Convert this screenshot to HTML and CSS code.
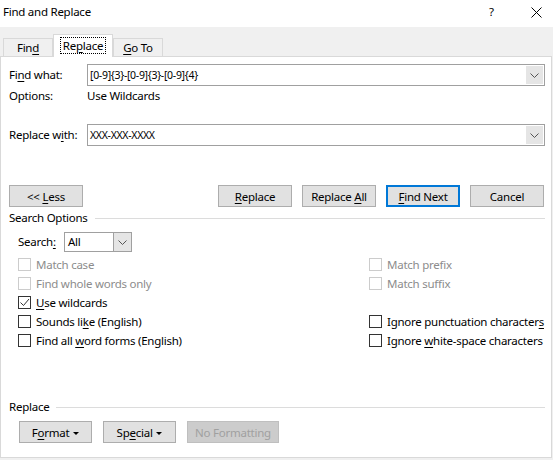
FILE: index.html
```html
<!DOCTYPE html>
<html lang="en">
<head>
    <meta charset="UTF-8">
    <title>Find and Replace</title>
    <link rel="stylesheet" href="styles.css">
</head>
<body>
    <div class="titlebar">
        <span class="title">Find and Replace</span>
        <span class="help">?</span>
        <span class="close">
            <svg width="11" height="11" viewBox="0 0 11 11"><path d="M0.5 0.5 L10.5 10.5 M10.5 0.5 L0.5 10.5" stroke="#000" stroke-width="1" fill="none"/></svg>
        </span>
    </div>

    <div class="tabs">
        <div class="tab find-tab">Fin<u>d</u></div>
        <div class="tab active"><span class="focus">Re<u>p</u>lace</span></div>
        <div class="tab goto-tab"><u>G</u>o To</div>
    </div>

    <div class="panel">
        <div class="field-row find-row">
            <label>Fi<u>n</u>d what:</label>
            <div class="combo">
                <span class="value">[0-9]{3}-[0-9]{3}-[0-9]{4}</span>
                <span class="drop"><svg width="9" height="5" viewBox="0 0 9 5"><path d="M0.5 0.5 L4.5 4.5 L8.5 0.5" stroke="#555" fill="none"/></svg></span>
            </div>
        </div>
        <div class="options-row">
            <span class="label">Options:</span>
            <span>Use Wildcards</span>
        </div>
        <div class="field-row replace-row">
            <label>Replace w<u>i</u>th:</label>
            <div class="combo">
                <span class="value">XXX-XXX-XXXX</span>
                <span class="drop"><svg width="9" height="5" viewBox="0 0 9 5"><path d="M0.5 0.5 L4.5 4.5 L8.5 0.5" stroke="#555" fill="none"/></svg></span>
            </div>
        </div>

        <div class="button-row">
            <button class="btn">&lt;&lt; <u>L</u>ess</button>
            <div class="actions">
                <button class="btn"><u>R</u>eplace</button>
                <button class="btn">Replace <u>A</u>ll</button>
                <button class="btn default"><u>F</u>ind Next</button>
                <button class="btn">Cancel</button>
            </div>
        </div>

        <div class="group-title search-title"><span>Search Options</span></div>

        <div class="search-row">
            <label>Search<u>:</u></label>
            <div class="select">
                <span class="value">All</span>
                <span class="drop"><svg width="9" height="5" viewBox="0 0 9 5"><path d="M0.5 0.5 L4.5 4.5 L8.5 0.5" stroke="#555" fill="none"/></svg></span>
            </div>
        </div>

        <div class="checks">
            <div class="check disabled"><span class="box"></span><span>Match case</span></div>
            <div class="check disabled"><span class="box"></span><span>Match prefix</span></div>
            <div class="check disabled"><span class="box"></span><span>Find whole words only</span></div>
            <div class="check disabled"><span class="box"></span><span>Match suffix</span></div>
            <div class="check"><span class="box"><svg width="11" height="11" viewBox="0 0 11 11"><path d="M1.5 5.5 L4.5 8.5 L10 2" stroke="#333" stroke-width="1" fill="none"/></svg></span><span><u>U</u>se wildcards</span></div>
            <div></div>
            <div class="check"><span class="box"></span><span>Sounds li<u>k</u>e (English)</span></div>
            <div class="check"><span class="box"></span><span>Ignore punctuation character<u>s</u></span></div>
            <div class="check"><span class="box"></span><span>Find all <u>w</u>ord forms (English)</span></div>
            <div class="check"><span class="box"></span><span>Ignore <u>w</u>hite-space characters</span></div>
        </div>

        <div class="group-title replace-title"><span>Replace</span></div>

        <div class="format-row">
            <button class="btn menu">F<u>o</u>rmat <span class="caret"></span></button>
            <button class="btn menu">Sp<u>e</u>cial <span class="caret"></span></button>
            <button class="btn off">No Formatting</button>
        </div>
    </div>
</body>
</html>
```

FILE: styles.css
```css
body {
    margin: 0;
    width: 553px;
    height: 460px;
    background-color: #f0f0f0;
    font-family: "Noto Sans", sans-serif;
    font-size: 11.5px;
    letter-spacing: -0.25px;
    line-height: 16px;
    color: #000;
    overflow: hidden;
}
u {
    text-underline-offset: 2px;
}
.titlebar {
    height: 27px;
    background-color: white;
    display: flex;
    align-items: center;
    padding-left: 3px;
}
.title {
    flex: 1;
    margin-top: -3px;
}
.help {
    width: 20px;
    margin-right: 22px;
    margin-top: -3px;
}
.close {
    width: 22px;
    display: flex;
    margin-top: -3px;
}
.tabs {
    height: 29px;
    display: flex;
    align-items: flex-end;
    padding-left: 3px;
}
.tab {
    height: 18px;
    box-sizing: border-box;
    border: 1px solid #d9d9d9;
    border-bottom: none;
    line-height: 18px;
    text-align: center;
}
.find-tab {
    width: 50px;
}
.goto-tab {
    width: 50px;
}
.tab.active {
    width: 60px;
    height: 23px;
    background-color: white;
    margin-bottom: -1px;
    line-height: 20px;
    position: relative;
    z-index: 1;
}
.focus {
    display: inline-block;
    border: 1px dotted #000;
    padding: 0 2px;
    line-height: 15px;
    margin-top: 2px;
}
.panel {
    width: 552px;
    height: 402px;
    box-sizing: border-box;
    background-color: white;
    border: 1px solid #d9d9d9;
    padding: 0 6px 0 8px;
}
.field-row {
    display: flex;
    align-items: center;
}
.field-row label {
    width: 78px;
}
.find-row {
    margin-top: 7px;
}
.replace-row {
    margin-top: 20px;
}
.combo {
    flex: 1;
    height: 22px;
    box-sizing: border-box;
    border: 1px solid #a0a0a0;
    display: flex;
    align-items: center;
    padding-left: 2px;
}
.combo .value {
    flex: 1;
    font-size: 10.5px;
    letter-spacing: -0.3px;
}
.drop {
    width: 17px;
    height: 18px;
    margin-right: 1px;
    background-color: #e5e5e5;
    display: flex;
    align-items: center;
    justify-content: center;
}
.options-row {
    margin-top: 2px;
    height: 16px;
    display: flex;
}
.options-row .label {
    width: 78px;
}
.button-row {
    margin-top: 39px;
    display: flex;
    justify-content: space-between;
}
.actions {
    display: flex;
    gap: 10px;
    margin-right: 1px;
}
.btn {
    width: 74px;
    height: 22px;
    box-sizing: border-box;
    background-color: #e1e1e1;
    border: 1px solid #adadad;
    font-family: inherit;
    font-size: 11.5px;
    letter-spacing: -0.25px;
    color: #000;
    padding: 0;
}
.btn.default {
    border: 2px solid #0078d7;
}
.group-title {
    display: flex;
    align-items: center;
    height: 16px;
}
.group-title::after {
    content: "";
    flex: 1;
    height: 1px;
    background-color: #dcdcdc;
    margin-left: 7px;
}
.search-title {
    margin-top: 3px;
}
.search-row {
    margin-top: 6px;
    display: flex;
    align-items: center;
    padding-left: 9px;
}
.search-row label {
    width: 46px;
}
.select {
    width: 68px;
    height: 20px;
    box-sizing: border-box;
    border: 1px solid #a0a0a0;
    display: flex;
    align-items: center;
    padding-left: 3px;
}
.select .value {
    flex: 1;
}
.select .drop {
    height: 18px;
    margin-right: 0;
    border-left: 1px solid #a0a0a0;
}
.checks {
    margin-top: 3px;
    padding-left: 9px;
    display: grid;
    grid-template-columns: 351px 1fr;
    grid-auto-rows: 19px;
}
.check {
    display: flex;
    align-items: center;
    white-space: nowrap;
}
.box {
    width: 13px;
    height: 13px;
    box-sizing: border-box;
    border: 1px solid #333;
    margin-right: 5px;
    display: flex;
    align-items: center;
    justify-content: center;
}
.check.disabled {
    color: #8c8c8c;
}
.check.disabled .box {
    border-color: #cccccc;
}
.replace-title {
    margin-top: 49px;
}
.format-row {
    margin-top: 6px;
    padding-left: 10px;
    display: flex;
    gap: 11px;
}
.format-row .btn {
    width: 73px;
}
.format-row .btn.off {
    width: 92px;
    background-color: #cccccc;
    border-color: #bfbfbf;
    color: #a0a0a0;
}
.caret {
    display: inline-block;
    width: 0;
    height: 0;
    border-left: 3px solid transparent;
    border-right: 3px solid transparent;
    border-top: 3px solid #000;
    vertical-align: middle;
    margin-left: 1px;
}
```
